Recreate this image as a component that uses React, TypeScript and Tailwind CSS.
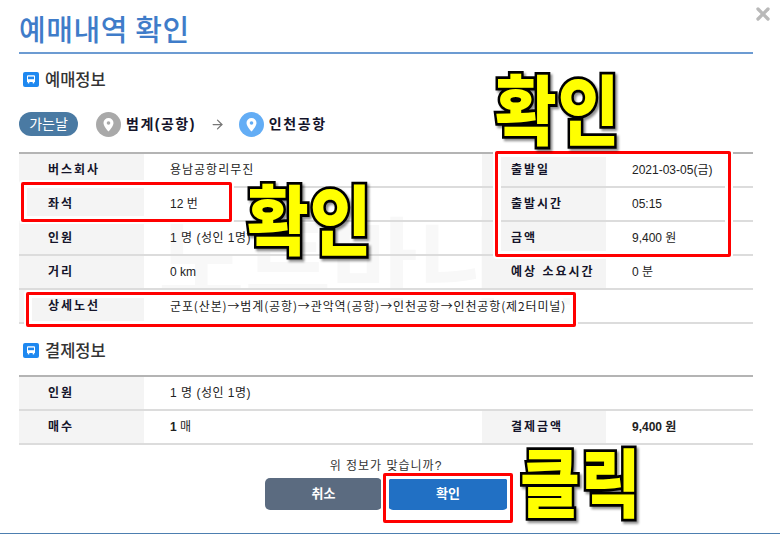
import { ArrowRight, X } from "lucide-react";

const labelFont = "font-['Liberation_Sans','Noto_Sans_CJK_KR',sans-serif]";

function BusBadge() {
  return (
    <span className="flex h-[15px] w-[16px] items-center justify-center rounded-[2px] bg-[#1e88f0]">
      <svg viewBox="0 0 12 12" className="h-[12px] w-[12px]" fill="none">
        <path d="M3 2.2h6a1 1 0 0 1 1 1V9H2V3.200a1 1 0 0 1 1-1z" fill="#fff" />
        <rect x="3" y="3.600" width="6" height="2.600" fill="#1e88f0" />
        <rect x="2.800" y="9" width="1.500" height="1.400" fill="#fff" />
        <rect x="7.700" y="9" width="1.500" height="1.400" fill="#fff" />
      </svg>
    </span>
  );
}

function Pin({ color }: { color: string }) {
  return (
    <svg viewBox="0 0 25 25" className="h-[25px] w-[25px] shrink-0">
      <circle cx="12.500" cy="12.500" r="12.500" fill={color} />
      <path d="M12.500 6a5 5 0 0 0-5 5c0 3.400 5 8.500 5 8.500s5-5.100 5-8.500a5 5 0 0 0-5-5z" fill="#fff" />
      <circle cx="12.500" cy="11" r="1.800" fill={color} />
    </svg>
  );
}

function Th({ children }: { children: string }) {
  return (
    <div className="flex items-center bg-[#f4f4f4] pl-[29px] text-[12px] font-bold tracking-[2px] text-[#14142a]">
      {children}
    </div>
  );
}

function Td({ children, bold, span, className = "" }: { children: React.ReactNode; bold?: boolean; span?: boolean; className?: string }) {
  return (
    <div className={`flex items-center pl-[26px] text-[12px] text-[#222] ${bold ? "font-bold" : ""} ${span ? "col-span-3" : ""} ${className}`}>
      {children}
    </div>
  );
}

function Row({ children }: { children: React.ReactNode }) {
  return (
    <div className="grid h-[34px] grid-cols-[125px_338px_124px_1fr] border-b-2 border-[#dcdcdc]">{children}</div>
  );
}

function RedBox({ className }: { className: string }) {
  return (
    <div className={`absolute rounded-[2px] border-[3px] border-[#f00] shadow-[0_0_0_2px_#fff,inset_0_0_0_3px_#fff] ${className}`} />
  );
}

function Sticker({ children, className }: { children: string; className: string }) {
  return (
    <div
      className={`absolute origin-top scale-y-[1.14] font-['Noto_Sans_CJK_KR',sans-serif] font-black leading-none tracking-[1px] text-[#ffff00] [-webkit-text-stroke:5px_#000] [paint-order:stroke_fill] drop-shadow-[2px_2px_1px_rgba(0,0,0,0.45)] ${className}`}
    >
      {children}
    </div>
  );
}

export default function App() {
  return (
    <div className={`relative h-[534px] w-[780px] overflow-hidden bg-white ${labelFont}`}>
      <div className="absolute left-[158px] top-[208px] select-none font-['Noto_Sans_CJK_KR',sans-serif] text-[94px] font-bold leading-none text-[#f8f8f8]">
        노트마니아
      </div>

      <div className="relative mx-[19px] flex h-full w-[734px] flex-col">
        <h1 className="h-[52px] pt-[6px] font-['Noto_Sans_CJK_KR',sans-serif] text-[29px] font-medium leading-[44px] tracking-[0.600px] text-[#3f7cc9]">예매내역 확인</h1>
        <div className="h-[2px] bg-[#6c9bd2]" />

        <div className="mt-[15px] flex items-center gap-[6px] pl-[4px] font-['Noto_Sans_CJK_KR',sans-serif] text-[16.500px] font-medium text-[#333]">
          <BusBadge />
          <span className="leading-[20px]">예매정보</span>
        </div>

        <div className="mt-[22px] flex h-[26px] items-center text-[14px] font-bold text-[#14142a]">
          <span className="flex h-[24px] w-[59px] items-center justify-center rounded-full bg-[#4a7aa3] text-[14px] font-normal text-white">가는날</span>
          <span className="ml-[18px]"><Pin color="#a9a9a9" /></span>
          <span className="ml-[5px] tracking-[1.500px]">범계(공항)</span>
          <ArrowRight className="ml-[14px] h-[15px] w-[15px] text-[#777]" strokeWidth={2} />
          <span className="ml-[14px]"><Pin color="#63adf5" /></span>
          <span className="ml-[5px] tracking-[1.600px]">인천공항</span>
        </div>

        <div className="mt-[15px] border-t-2 border-[#b4b4b4]">
          <Row>
            <Th>버스회사</Th>
            <Td className="tracking-[1px]">용남공항리무진</Td>
            <Th>출발일</Th>
            <Td>2021-03-05(금)</Td>
          </Row>
          <Row>
            <Th>좌석</Th>
            <Td>12 번</Td>
            <Th>출발시간</Th>
            <Td className="text-[11px]">05:15</Td>
          </Row>
          <Row>
            <Th>인원</Th>
            <Td className="tracking-[0.500px]">1 명 (성인 1명)</Td>
            <Th>금액</Th>
            <Td className="text-[11px]">9,400 원</Td>
          </Row>
          <Row>
            <Th>거리</Th>
            <Td>0 km</Td>
            <Th>예상 소요시간</Th>
            <Td>0 분</Td>
          </Row>
          <Row>
            <Th>상세노선</Th>
            <Td span className="font-['Noto_Sans_CJK_KR',sans-serif] tracking-[0.870px]">군포(산본)→범계(공항)→관악역(공항)→인천공항→인천공항(제2터미널)</Td>
          </Row>
        </div>

        <div className="mt-[16px] flex items-center gap-[6px] pl-[4px] font-['Noto_Sans_CJK_KR',sans-serif] text-[16.500px] font-medium text-[#333]">
          <BusBadge />
          <span className="leading-[20px]">결제정보</span>
        </div>

        <div className="mt-[15px] border-t-2 border-[#b4b4b4]">
          <Row>
            <Th>인원</Th>
            <Td span className="tracking-[0.500px]">1 명 (성인 1명)</Td>
          </Row>
          <Row>
            <Th>매수</Th>
            <div className="flex items-center pl-[26px] text-[12px] text-[#222]">
              <b>1</b>&nbsp;매
            </div>
            <Th>결제금액</Th>
            <Td bold>9,400 원</Td>
          </Row>
        </div>

        <p className="mt-[13px] text-center text-[12px] leading-[16px] tracking-[1px] text-[#333]">위 정보가 맞습니까?</p>
        <div className="mt-[4px] flex justify-center gap-[6px] pl-[1px]">
          <button className="h-[32px] w-[117px] rounded-[5px] bg-[#5b6b80] text-[13px] font-bold text-white">취소</button>
          <button className="h-[32px] w-[120px] rounded-[5px] bg-[#2170c4] text-[13px] font-bold text-white">확인</button>
        </div>
      </div>

      <X className="absolute left-[753px] top-[4px] h-[20px] w-[20px] text-[#b9b9b9]" strokeWidth={4} />
      <div className="absolute bottom-0 left-0 h-[1px] w-full bg-[#4d7fb0]" />

      <RedBox className="left-[21px] top-[182px] h-[40px] w-[211px]" />
      <RedBox className="left-[26px] top-[292px] h-[35px] w-[550px]" />
      <RedBox className="left-[495px] top-[151px] h-[106px] w-[236px]" />
      <RedBox className="left-[383px] top-[473px] h-[50px] w-[130px]" />

      <Sticker className="left-[495px] top-[67px] text-[67px]">확인</Sticker>
      <Sticker className="left-[247px] top-[177px] text-[67px]">확인</Sticker>
      <Sticker className="left-[520px] top-[443px] text-[65px]">클릭</Sticker>
    </div>
  );
}
